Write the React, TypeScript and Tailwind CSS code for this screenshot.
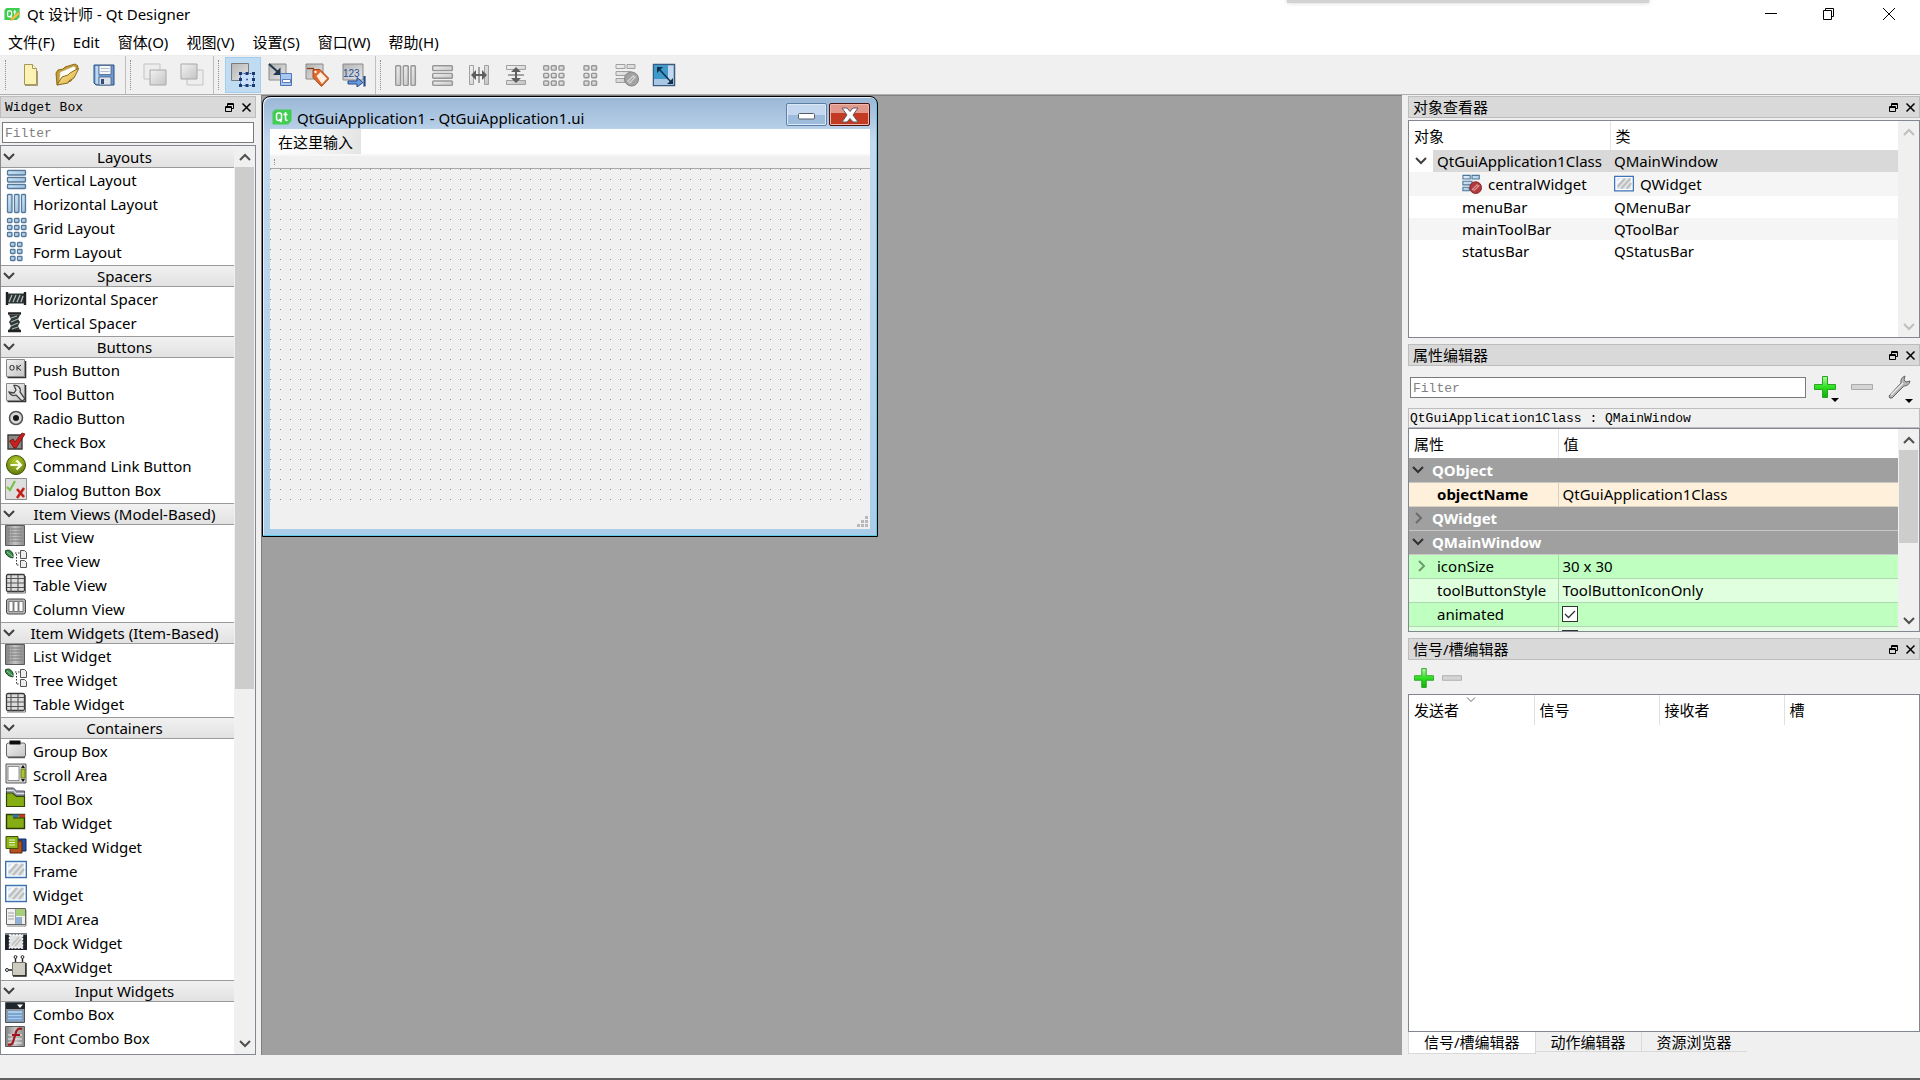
import React from 'react';
import clsx from 'clsx';

type IconProps = { className?: string };
type IconType = React.FC<IconProps>;

const MONO = "font-['Liberation_Mono','Noto_Sans_CJK_SC',monospace] text-[13px]";

/* ---------- shared gradients ---------- */

const Gradients = () => (
  <svg width="0" height="0" className="absolute" aria-hidden="true">
    <defs>
      <linearGradient id="blue" x1="0" y1="0" x2="1" y2="1">
        <stop offset="0" stopColor="#e4f2fb" />
        <stop offset="1" stopColor="#8db7da" />
      </linearGradient>
      <linearGradient id="grey" x1="0" y1="0" x2="1" y2="1">
        <stop offset="0" stopColor="#f2f2f2" />
        <stop offset="1" stopColor="#c4c4c4" />
      </linearGradient>
      <linearGradient id="steel" x1="0" y1="0" x2="1" y2="1">
        <stop offset="0" stopColor="#b4b4b4" />
        <stop offset="1" stopColor="#e6e6e6" />
      </linearGradient>
      <linearGradient id="dark" x1="0" y1="0" x2="1" y2="0">
        <stop offset="0" stopColor="#808080" />
        <stop offset="0.5" stopColor="#c4c4c4" />
        <stop offset="1" stopColor="#8a8a8a" />
      </linearGradient>
      <linearGradient id="plus" x1="0" y1="0" x2="0" y2="1">
        <stop offset="0" stopColor="#b6f7a8" />
        <stop offset="0.5" stopColor="#2fe021" />
        <stop offset="1" stopColor="#0fae0b" />
      </linearGradient>
      <linearGradient id="gold" x1="0" y1="0" x2="1" y2="1">
        <stop offset="0" stopColor="#fdf0a4" />
        <stop offset="1" stopColor="#d9a93a" />
      </linearGradient>
      <radialGradient id="olive" cx="0.5" cy="0.3" r="0.8">
        <stop offset="0" stopColor="#b4cc2c" />
        <stop offset="1" stopColor="#56700a" />
      </radialGradient>
    </defs>
  </svg>
);

/* ---------- small glyphs ---------- */

const Chevron = ({ className, dir = 'down' }: { className?: string; dir?: 'up' | 'down' | 'right' }) => (
  <svg viewBox="0 0 12 12" className={clsx('h-3 w-3', className)} fill="none" stroke="currentColor" strokeWidth="2">
    {dir === 'down' && <path d="M1 3l5 5 5-5" />}
    {dir === 'up' && <path d="M1 9l5-5 5 5" />}
    {dir === 'right' && <path d="M4 1l5 5-5 5" />}
  </svg>
);

const QtLogo = ({ pencil, className }: { pencil?: boolean; className?: string }) => (
  <svg viewBox="0 0 20 16" className={className}>
    <path d="M3 0.500h16.500v11.500l-3.500 3.500H0.500V3z" fill="#41cd52" />
    <g fill="none" stroke="#fff" strokeWidth="1.500">
      <rect x="4.500" y="4" width="5" height="7.500" rx="2" />
      <path d="M7.500 10l2 3M13.500 3v7q0 1.500 2 1.500M11.500 5.500h4" />
    </g>
    {pencil && <path d="M18.500 5 9 13l-1 3 4-1 7.500-7z" fill="#f0c64a" stroke="#b98e28" strokeWidth="0.600" />}
  </svg>
);

/* ---------- layout block icons ---------- */

type Block = [number, number, number, number];

const ROWS: Block[] = [[2.5, 2.5, 18, 4.5], [2.5, 9.5, 18, 4.5], [2.5, 16.5, 18, 4]];
const COLS: Block[] = [[2.5, 2.5, 4.5, 18], [9.5, 2.5, 4.5, 18], [16.5, 2.5, 4, 18]];
const GRID: Block[] = [2.5, 9.5, 16.5].flatMap((y) => [2.5, 9.5, 16.5].map((x): Block => [x, y, 4.5, 4]));
const FORM: Block[] = [2.5, 9.5, 16.5].flatMap((y) => [5.5, 12.5].map((x): Block => [x, y, 4.5, 4]));

const blocks = (list: Block[], grey = false): IconType =>
  function BlocksIcon({ className }) {
    return (
      <svg viewBox="0 0 22 22" className={className}>
        {list.map(([x, y, w, h]) => (
          <rect
            key={`${x}-${y}`}
            x={x}
            y={y}
            width={w}
            height={h}
            rx="0.800"
            fill={grey ? 'url(#grey)' : 'url(#blue)'}
            stroke={grey ? '#969696' : '#55799c'}
            strokeWidth="1.300"
          />
        ))}
      </svg>
    );
  };

/* ---------- toolbar icons ---------- */

const NewIcon: IconType = ({ className }) => (
  <svg viewBox="0 0 24 24" className={className}>
    <path d="M6.500 1.500h8l4 4v16h-12z" fill="#fbf3b4" stroke="#a99753" />
    <path d="M14.500 1.500v4h4" fill="#fffbe0" stroke="#a99753" />
    <path d="M7 22.500h12.500V8" fill="none" stroke="#6d5f2a" strokeOpacity="0.600" />
  </svg>
);

const OpenIcon: IconType = ({ className }) => (
  <svg viewBox="0 0 24 24" className={className}>
    <path d="M1 10 3 7l5-1 2-2 10-3 3 2-2 5-5 10L2 22z" fill="#c69a35" stroke="#8e6a1c" />
    <path d="m5 9 14-6 2 2-3 9L4 18z" fill="#fdfdf6" stroke="#b9a565" strokeWidth="0.700" />
    <path d="m2 22 5-8 6-2 2-2 9-5-5 10-5 3-1 2z" fill="url(#gold)" stroke="#8e6a1c" />
  </svg>
);

const SaveIcon: IconType = ({ className }) => (
  <svg viewBox="0 0 24 24" className={className}>
    <path d="M2 2h20v20H4l-2-2z" fill="#6c9ad0" stroke="#2b4f82" />
    <path d="M3.500 3h3v18H5l-1.500-1z" fill="#bcd9f5" />
    <path d="M7 2.500h12v9H7z" fill="#f4f6f8" stroke="#48628a" strokeWidth="0.800" />
    <path d="M8.500 5.500h9M8.500 8.500h9" stroke="#b8bec6" />
    <path d="M7 14h12v8H7z" fill="#dfe3e8" stroke="#48628a" strokeWidth="0.800" />
    <path d="M9 16h3v5H9z" fill="#2f4f80" />
  </svg>
);

const LowerIcon: IconType = ({ className }) => (
  <svg viewBox="0 0 24 24" className={className}>
    <path d="M1 1h16v15H1z" fill="#ededed" stroke="#c3c3c3" />
    <path d="M7 7h16v15H7z" fill="url(#grey)" stroke="#a8a8a8" />
  </svg>
);

const RaiseIcon: IconType = ({ className }) => (
  <svg viewBox="0 0 24 24" className={className}>
    <path d="M7 7h16v15H7z" fill="#ededed" stroke="#c3c3c3" />
    <path d="M1 1h16v15H1z" fill="url(#grey)" stroke="#a8a8a8" />
  </svg>
);

const EditWidgetsIcon: IconType = ({ className }) => (
  <svg viewBox="0 0 24 24" className={className}>
    <path d="M0.500 0.500h17v17h-17z" fill="url(#steel)" stroke="#7b7b7b" />
    <path d="M9.500 10.500h13v12h-13z" fill="#c9dffc" stroke="#3a5f9e" strokeDasharray="2 1" />
    <g fill="#1b3a70">
      <path d="M8 9h3v3H8zM14.500 9h3v3h-3zM21 9h3v3h-3zM8 15h3v3H8zM21 15h3v3h-3zM8 21h3v3H8zM14.500 21h3v3h-3zM21 21h3v3h-3z" />
      <path d="M15.300 15.800h1.500v1.500h-1.500z" />
    </g>
  </svg>
);

const EditSignalsIcon: IconType = ({ className }) => (
  <svg viewBox="0 0 24 24" className={className}>
    <path d="M1 1h17v16H1z" fill="url(#steel)" stroke="#8a8a8a" />
    <path d="M1 1 11 10" stroke="#22364d" strokeWidth="2" />
    <path d="M12.500 4.500v7.500H5z" fill="#22364d" />
    <path d="M12.500 10.500h11v12h-11z" fill="#a8c8f2" stroke="#4a76b8" />
    <path d="M14.500 16.500h8v3h-8z" fill="#fff" stroke="#3f66a5" strokeWidth="0.800" />
  </svg>
);

const EditBuddiesIcon: IconType = ({ className }) => (
  <svg viewBox="0 0 24 24" className={className}>
    <path d="M1 1h17v15H1z" fill="url(#steel)" stroke="#8a8a8a" />
    <path d="M2 5.500h7" stroke="#8b3a14" strokeWidth="1.300" />
    <path d="M8 6.500h7l9 9-7.500 8L8 14.500z" fill="#e0682c" stroke="#a8481a" />
    <path d="m11.500 13 4-4 6.500 6.500-5 5.500z" fill="#fdeedf" />
    <circle cx="10.500" cy="9" r="1.200" fill="#fff" />
  </svg>
);

const TabOrderIcon: IconType = ({ className }) => (
  <svg viewBox="0 0 24 24" className={className}>
    <path d="M1 1h20v16H1z" fill="url(#steel)" stroke="#8a8a8a" />
    <text x="1" y="14" fontSize="10" fontFamily="Liberation Sans, sans-serif" fill="#274f96">123</text>
    <path d="M6 18h9v-3.500l6 5-6 4.500v-3H6z" fill="#6a9bdc" stroke="#24498c" />
    <path d="M22.500 13v10.500" stroke="#24498c" strokeWidth="2.200" />
  </svg>
);

const HSplitIcon: IconType = ({ className }) => (
  <svg viewBox="0 0 24 24" className={className}>
    <path d="M2.500 2.500h4v19h-4zM17.500 2.500h4v19h-4z" fill="url(#grey)" stroke="#a0a0a0" />
    <path d="M12 4v16" stroke="#8a8a8a" strokeWidth="1.500" />
    <path d="M4 12l5-5v4h6V7l5 5-5 5v-4H9v4z" fill="#5e5e5e" />
  </svg>
);

const VSplitIcon: IconType = ({ className }) => (
  <svg viewBox="0 0 24 24" className={className}>
    <path d="M2.500 2.500h19v4h-19zM2.500 17.500h19v4h-19z" fill="url(#grey)" stroke="#a0a0a0" />
    <path d="M4 12h16" stroke="#8a8a8a" strokeWidth="1.500" />
    <path d="M12 4l5 5h-4v6h4l-5 5-5-5h4V9H7z" fill="#5e5e5e" />
  </svg>
);

const BreakLayoutIcon: IconType = ({ className }) => (
  <svg viewBox="0 0 24 24" className={className}>
    <path d="M1 1.500h9v4H1zM12 1.500h8v4h-8zM1 8.500h15v4H1zM1 15.500h9v4H1z" fill="url(#grey)" stroke="#a0a0a0" />
    <circle cx="16.500" cy="16" r="7" fill="#a2a2a2" stroke="#858585" />
    <path d="m13 18 5-5 2 1-5 6z" fill="none" stroke="#d2d2d2" strokeWidth="1.400" />
  </svg>
);

const AdjustSizeIcon: IconType = ({ className }) => (
  <svg viewBox="0 0 24 24" className={className}>
    <path d="M1.500 1.500h21v21h-21z" fill="#c2d9ef" stroke="#3a5a80" strokeWidth="1.500" />
    <path d="M2 2h14v14H2z" fill="#3f9acb" />
    <path d="M2 16h14v6H2z" fill="#a9c6e4" />
    <path d="m7 6 12 13" stroke="#10304c" strokeWidth="1.500" />
    <path d="M5 4h6l-6 6zM21 21h-6l6-6z" fill="#10304c" />
  </svg>
);

/* ---------- widget box icons ---------- */

const HSpacerIcon: IconType = ({ className }) => (
  <svg viewBox="0 0 22 22" className={className}>
    <path d="M2 5v13M20 5v13" stroke="#222" strokeWidth="2.400" />
    <path d="M3 6.500h16v10H3z" fill="#2c3434" />
    <path d="m4 15 3-7M8 15l3-7M12 15l3-7M16 15l2-6" stroke="#aebaba" strokeWidth="1.300" />
  </svg>
);

const VSpacerIcon: IconType = ({ className }) => (
  <svg viewBox="0 0 22 22" className={className}>
    <path d="M3 2.500h13M3 20h13" stroke="#222" strokeWidth="2.600" />
    <path d="M4 4h11l-2 4 2 3-2 4 2 4H4l2-4-2-4 2-3z" fill="#2f3737" />
    <path d="m6 7 6-2M6 11l7-3M6 15l7-3M7 18l6-2" stroke="#a6b2b2" strokeWidth="1.200" />
  </svg>
);

const KeyCap = ({ children, className }: { children: React.ReactNode; className?: string }) => (
  <svg viewBox="0 0 22 22" className={className}>
    <path d="M2.500 19.500h18V3" fill="none" stroke="#333" strokeWidth="1.600" />
    <path d="M1.500 1.500h18v17h-18z" fill="url(#grey)" stroke="#8a8a8a" />
    {children}
  </svg>
);

const PushButtonIcon: IconType = ({ className }) => (
  <KeyCap className={className}>
    <rect x="5" y="7.500" width="4" height="4.500" rx="1.500" fill="none" stroke="#222" />
    <path d="M12 7v5.500M16 7l-3.500 2.700L16 12.500" fill="none" stroke="#222" />
  </KeyCap>
);

const ToolButtonIcon: IconType = ({ className }) => (
  <KeyCap className={className}>
    <path d="M9 3.500a5 5 0 0 1 6 6.500l5 7-3 2-6-6a5 5 0 0 1-7-3l5 1 2-3z" fill="#e4e4e4" stroke="#444" strokeWidth="1.300" />
  </KeyCap>
);

const RadioIcon: IconType = ({ className }) => (
  <svg viewBox="0 0 22 22" className={className}>
    <circle cx="11" cy="12" r="6.500" fill="#d8d8d8" stroke="#555" strokeWidth="1.600" />
    <circle cx="11" cy="12" r="3" fill="#151515" />
  </svg>
);

const CheckIcon: IconType = ({ className }) => (
  <svg viewBox="0 0 22 22" className={className}>
    <path d="M3 5h14v14H3z" fill="#8e8787" stroke="#3d3838" strokeWidth="1.400" />
    <path d="M4.500 11 8 9l2 3 7-9 3 1-9 14H9z" fill="#c9201f" stroke="#6f0f0f" strokeWidth="0.800" />
  </svg>
);

const CommandLinkIcon: IconType = ({ className }) => (
  <svg viewBox="0 0 22 22" className={className}>
    <circle cx="11" cy="11" r="9.500" fill="url(#olive)" stroke="#3e5208" />
    <path d="M5.500 11h10M11.500 6.500 16 11l-4.500 4.500" fill="none" stroke="#fbffe8" strokeWidth="2.200" />
  </svg>
);

const DialogBoxIcon: IconType = ({ className }) => (
  <svg viewBox="0 0 22 22" className={className}>
    <path d="M0.500 0.500h21v21H0.500z" fill="#dedede" stroke="#8f8f8f" />
    <path d="m2 9 3 3 5-9" fill="none" stroke="#79c043" strokeWidth="2.200" />
    <path d="m12 11 7 8M19 10l-7 10" stroke="#c4201c" strokeWidth="2.600" />
  </svg>
);

const ListIcon: IconType = ({ className }) => (
  <svg viewBox="0 0 22 22" className={className}>
    <path d="M0.500 0.500h19v20h-19z" fill="url(#dark)" stroke="#5a5a5a" />
    <path d="M3 4h2m1 0h11M3 7h2m1 0h11M3 10h2m1 0h11M3 13h2m1 0h11M3 16h2m1 0h11" stroke="#747474" strokeWidth="0.900" />
  </svg>
);

const TreeIcon: IconType = ({ className }) => (
  <svg viewBox="0 0 22 22" className={className}>
    <path d="M0 2q5-3 8 3v4Q1 8 0 2z" fill="#3f8a4f" stroke="#1c4a28" />
    <path d="m2 3 6 5" stroke="#a5d8ae" strokeWidth="0.800" />
    <path d="M10 4h5M11.500 5v11M12 16h3" stroke="#333" strokeDasharray="1.500 1.500" />
    <path d="M15.500 1.500h4l2 2v6h-6zM15.500 11.500h4l2 2v5h-6z" fill="#eee" stroke="#555" />
  </svg>
);

const TableIcon: IconType = ({ className }) => (
  <svg viewBox="0 0 22 22" className={className}>
    <path d="M2 20h18.500V3" fill="none" stroke="#777" />
    <rect x="1.500" y="1.500" width="18" height="17" rx="1.500" fill="#dcdcdc" stroke="#3a3a3a" strokeWidth="1.300" />
    <path d="M2 5.500h17M2 10h17M2 14.500h17M6 2v17M13 2v17" stroke="#555" strokeWidth="1.100" />
  </svg>
);

const ColumnIcon: IconType = ({ className }) => (
  <svg viewBox="0 0 22 22" className={className}>
    <rect x="1.500" y="2" width="19" height="15" rx="2" fill="#b5b5b5" stroke="#4a4a4a" />
    <path d="M4 4.500h4v10H4zM9 4.500h4v10H9zM14 4.500h4v10h-4z" fill="#fff" stroke="#555" strokeWidth="0.700" />
  </svg>
);

const GroupBoxIcon: IconType = ({ className }) => (
  <svg viewBox="0 0 22 22" className={className}>
    <rect x="1.500" y="4" width="19" height="14" rx="2" fill="url(#grey)" stroke="#666" />
    <path d="M3 18.500h17" stroke="#555" strokeWidth="1.500" />
    <path d="M4.500 1.500h11v4h-11z" fill="#0d0d0d" />
  </svg>
);

const ScrollAreaIcon: IconType = ({ className }) => (
  <svg viewBox="0 0 22 22" className={className}>
    <path d="M1 1h20v19H1z" fill="#d4d4d4" stroke="#5d5d5d" />
    <path d="M3 3.500h11v14H3z" fill="#fff" stroke="#777" strokeWidth="0.800" />
    <path d="M16 6h4v9h-4z" fill="#a9c52d" stroke="#5b6d0e" strokeWidth="0.800" />
    <path d="m18 2 2 3h-4zM18 19l-2-3h4z" fill="#111" />
  </svg>
);

const ToolBoxIcon: IconType = ({ className }) => (
  <svg viewBox="0 0 22 22" className={className}>
    <path d="M1.500 1h7l3 3h8v5h-18z" fill="#9aa0aa" stroke="#4a4f58" />
    <path d="M1.500 3.500h7l3 3h8" fill="none" stroke="#dfe2e6" />
    <path d="M1.500 6h6l4 3.500h8v10h-18z" fill="#86ad14" stroke="#33450a" strokeWidth="1.200" />
  </svg>
);

const TabIcon: IconType = ({ className }) => (
  <svg viewBox="0 0 22 22" className={className}>
    <path d="M1.500 3.500h18v14h-18z" fill="#86ad14" stroke="#2c3b08" strokeWidth="1.400" />
    <path d="M8 3.500h5v3H8z" fill="#2f6fc0" />
    <path d="M14 3.500h6v3h-6z" fill="#c23a2c" />
    <path d="M8 7h12" stroke="#2c3b08" />
  </svg>
);

const StackedIcon: IconType = ({ className }) => (
  <svg viewBox="0 0 22 22" className={className}>
    <path d="M9 4h12v12H9z" fill="#2353a8" stroke="#12295a" />
    <path d="M5 6h12v12H5z" fill="#b4511c" stroke="#5c260a" />
    <path d="M1 1.500h12v12H1z" fill="#8db41c" stroke="#3d510a" />
    <path d="M4 5h6M4 7.500h6M4 10h6" stroke="#eef7c5" />
  </svg>
);

const FrameIcon: IconType = ({ className }) => (
  <svg viewBox="0 0 22 22" className={className}>
    <path d="M0.700 2.500h20.600v16H0.700z" fill="#fff" stroke="#3f73b3" strokeWidth="1.400" />
    <path d="M3 4.500h16v12H3z" fill="#d9e6f3" />
    <path d="m4 14 8-9M8 16 18 5M14 16l5-6" stroke="#c4bdb2" strokeWidth="2.200" />
    <path d="m3.500 10 5-5" stroke="#fff" strokeWidth="1.500" />
  </svg>
);

const MdiIcon: IconType = ({ className }) => (
  <svg viewBox="0 0 22 22" className={className}>
    <path d="M2 19h19V3" fill="none" stroke="#888" />
    <path d="M1.500 1.500h19v16h-19z" fill="#f1f1f1" stroke="#666" />
    <path d="M11 2h9v7h-9z" fill="#a6cf7a" />
    <path d="M11 10h5v7h-5z" fill="#8fb2d8" />
    <path d="M3 6h6M3 9h6M3 12h6M10.500 2v15M16.500 10v7" stroke="#a2a2a2" />
  </svg>
);

const DockIcon: IconType = ({ className }) => (
  <svg viewBox="0 0 22 22" className={className}>
    <path d="M0 2h22v17H0z" fill="#1e222a" />
    <path d="M0 2h22v2H0z" fill="#777b83" />
    <rect x="4.500" y="4" width="13" height="13" fill="#dfe3e6" stroke="#fff" strokeWidth="1.400" strokeDasharray="2 1.200" />
    <path d="m7 14 7-8M10 15l6-7" stroke="#c2beb6" strokeWidth="1.400" />
  </svg>
);

const AxIcon: IconType = ({ className }) => (
  <svg viewBox="0 0 22 22" className={className}>
    <path d="M10.500 8V3M17.500 8V3M7 15H4" stroke="#222" strokeWidth="1.400" />
    <circle cx="10.500" cy="2" r="1.400" fill="#fff" stroke="#222" />
    <circle cx="17.500" cy="2" r="1.400" fill="#fff" stroke="#222" />
    <circle cx="2" cy="15" r="1.500" fill="#fff" stroke="#222" />
    <path d="M7.500 7.500h13v13h-13z" fill="#cfccc2" stroke="#77746a" />
    <path d="M8 21h13V8" fill="none" stroke="#222" strokeWidth="1.400" />
  </svg>
);

const ComboIcon: IconType = ({ className }) => (
  <svg viewBox="0 0 22 22" className={className}>
    <path d="M0.500 0.500h19v20h-19z" fill="#8b97a4" stroke="#4d5660" />
    <path d="M1 1h19v6H1z" fill="#20262e" />
    <path d="M12 2.500h6l-3 3.500z" fill="#fff" />
    <path d="M3 9h14v10H3z" fill="#a9cbec" />
    <path d="M3 12h14M3 15h14M3 18h14" stroke="#4f7fb3" />
  </svg>
);

const FontComboIcon: IconType = ({ className }) => (
  <svg viewBox="0 0 22 22" className={className}>
    <path d="M0.500 0.500h19v20h-19z" fill="url(#dark)" stroke="#5c5c5c" />
    <path d="M3 9h14M3 13h14M3 17h14" stroke="#eee" />
    <path d="M17 3q-5-2-6.500 5L8 16q-1 3.500-5 2.500M7 9h8" fill="none" stroke="#a3131b" strokeWidth="2.200" />
  </svg>
);

const NoLayoutIcon: IconType = ({ className }) => (
  <svg viewBox="0 0 22 22" className={className}>
    <path d="M1 1.500h8v4H1zM11 1.500h8v4h-8zM1 8h10v4H1zM1 14.500h7v4H1z" fill="url(#blue)" stroke="#4d7699" strokeWidth="1.200" />
    <circle cx="15" cy="15" r="6.500" fill="#b23a3c" stroke="#7d2224" />
    <path d="m11.500 17 5-5 2 1-5 5z" fill="none" stroke="#dc9c9c" strokeWidth="1.300" />
  </svg>
);

const PlusIcon: IconType = ({ className }) => (
  <svg viewBox="0 0 22 22" className={className}>
    <path d="M8.500 0.500h5v8h8v5h-8v8h-5v-8h-8v-5h8z" fill="url(#plus)" stroke="#2aa322" />
  </svg>
);

const MinusIcon: IconType = ({ className }) => (
  <svg viewBox="0 0 22 22" className={className}>
    <path d="M0.500 8.500h21v5h-21z" fill="#d4d4d4" stroke="#ababab" />
  </svg>
);

const WrenchIcon: IconType = ({ className }) => (
  <svg viewBox="0 0 24 24" className={className}>
    <path d="m2 21 12-13q-1-5 4-7l-1 4 2 2 4-1q-1 5-6 5L5 23q-3 1-3-2z" fill="#b4b4b4" stroke="#656565" />
    <path d="m4 20 12-12" stroke="#f2f2f2" strokeWidth="1.200" />
  </svg>
);

/* ---------- data ---------- */

const MENUS = ['文件(F)', 'Edit', '窗体(O)', '视图(V)', '设置(S)', '窗口(W)', '帮助(H)'];

const TOOLS: { name: string; Icon: IconType; active?: boolean }[][] = [
  [
    { name: 'New', Icon: NewIcon },
    { name: 'Open', Icon: OpenIcon },
    { name: 'Save', Icon: SaveIcon },
  ],
  [
    { name: 'Send to back', Icon: LowerIcon },
    { name: 'Bring to front', Icon: RaiseIcon },
  ],
  [
    { name: 'Edit widgets', Icon: EditWidgetsIcon, active: true },
    { name: 'Edit signals/slots', Icon: EditSignalsIcon },
    { name: 'Edit buddies', Icon: EditBuddiesIcon },
    { name: 'Edit tab order', Icon: TabOrderIcon },
  ],
  [
    { name: 'Lay out horizontally', Icon: blocks(COLS, true) },
    { name: 'Lay out vertically', Icon: blocks(ROWS, true) },
    { name: 'Horizontal splitter', Icon: HSplitIcon },
    { name: 'Vertical splitter', Icon: VSplitIcon },
    { name: 'Lay out in a grid', Icon: blocks(GRID, true) },
    { name: 'Lay out in a form', Icon: blocks(FORM, true) },
    { name: 'Break layout', Icon: BreakLayoutIcon },
    { name: 'Adjust size', Icon: AdjustSizeIcon },
  ],
];

const WIDGETS: { title: string; items: [string, IconType][] }[] = [
  {
    title: 'Layouts',
    items: [
      ['Vertical Layout', blocks(ROWS)],
      ['Horizontal Layout', blocks(COLS)],
      ['Grid Layout', blocks(GRID)],
      ['Form Layout', blocks(FORM)],
    ],
  },
  {
    title: 'Spacers',
    items: [
      ['Horizontal Spacer', HSpacerIcon],
      ['Vertical Spacer', VSpacerIcon],
    ],
  },
  {
    title: 'Buttons',
    items: [
      ['Push Button', PushButtonIcon],
      ['Tool Button', ToolButtonIcon],
      ['Radio Button', RadioIcon],
      ['Check Box', CheckIcon],
      ['Command Link Button', CommandLinkIcon],
      ['Dialog Button Box', DialogBoxIcon],
    ],
  },
  {
    title: 'Item Views (Model-Based)',
    items: [
      ['List View', ListIcon],
      ['Tree View', TreeIcon],
      ['Table View', TableIcon],
      ['Column View', ColumnIcon],
    ],
  },
  {
    title: 'Item Widgets (Item-Based)',
    items: [
      ['List Widget', ListIcon],
      ['Tree Widget', TreeIcon],
      ['Table Widget', TableIcon],
    ],
  },
  {
    title: 'Containers',
    items: [
      ['Group Box', GroupBoxIcon],
      ['Scroll Area', ScrollAreaIcon],
      ['Tool Box', ToolBoxIcon],
      ['Tab Widget', TabIcon],
      ['Stacked Widget', StackedIcon],
      ['Frame', FrameIcon],
      ['Widget', FrameIcon],
      ['MDI Area', MdiIcon],
      ['Dock Widget', DockIcon],
      ['QAxWidget', AxIcon],
    ],
  },
  {
    title: 'Input Widgets',
    items: [
      ['Combo Box', ComboIcon],
      ['Font Combo Box', FontComboIcon],
    ],
  },
];

/* ---------- building blocks ---------- */

const DockTitle = ({ title }: { title: string }) => {
  const latin = /^[\x20-\x7e]+$/.test(title);
  return (
    <div className="flex h-[22px] shrink-0 items-center border border-[#bdbdbd] bg-[#d9d9d9] pl-1">
      <h2 className={clsx('flex-1', latin && 'pt-0.5', latin && MONO)}>{title}</h2>
      <button aria-label={`Float ${title}`} className="flex w-[17px] justify-center">
        <svg viewBox="0 0 9 9" className="h-[9px] w-[9px]" fill="none" stroke="#000">
          <path d="M2.500 3V0.500h6v5H6.500M2.500 1.500h6M0.500 3.500h6v5h-6zM0.500 4.500h6" />
        </svg>
      </button>
      <button aria-label={`Close ${title}`} className="flex w-[17px] justify-center">
        <svg viewBox="0 0 9 9" className="h-[9px] w-[9px]" stroke="#000" strokeWidth="1.500">
          <path d="m0.500 0.500 8 8M8.500 0.500l-8 8" />
        </svg>
      </button>
    </div>
  );
};

const ScrollBar = ({ thumb, muted }: { thumb?: string; muted?: boolean }) => (
  <div
    className={clsx(
      'flex w-[21px] shrink-0 flex-col items-center bg-[#f0f0f0]',
      muted ? 'text-[#bfbfbf]' : 'text-[#505050]',
    )}
  >
    <div className="flex h-[21px] shrink-0 items-center">
      <Chevron dir="up" />
    </div>
    <div className="w-full flex-1">
      {thumb && <div className={clsx('mx-auto w-[19px] bg-[#cdcdcd]', thumb)} />}
    </div>
    <div className="flex h-[21px] shrink-0 items-center">
      <Chevron />
    </div>
  </div>
);

const FilterInput = ({ label, className }: { label: string; className?: string }) => (
  <input
    aria-label={label}
    placeholder="Filter"
    className={clsx(
      'h-[21px] min-w-0 border border-[#7a7a7a] bg-white px-0.5 pt-0.5 outline-none placeholder:text-[#808080]',
      MONO,
      className,
    )}
  />
);

/* ---------- panels ---------- */

const WidgetBox = () => (
  <aside className="flex w-64 shrink-0 flex-col">
    <DockTitle title="Widget Box" />
    <FilterInput label="Widget filter" className="mx-0.5 mt-1 shrink-0" />
    <div className="mt-0.5 flex min-h-0 flex-1 border border-[#828790] bg-white">
      <div className="min-w-0 flex-1 overflow-hidden">
        {WIDGETS.map(({ title, items }, i) => (
          <section key={title} className="pb-px">
            <h3>
              <button
                className={clsx(
                  'flex h-[22px] w-full items-center border-b border-[#9a9a9a] bg-linear-to-b from-[#f1f1f1] to-[#e2e2e2] pl-0.5',
                  i > 0 && 'border-t',
                )}
              >
                <Chevron className="text-[#404040]" />
                <span className="flex-1 text-center">{title}</span>
              </button>
            </h3>
            <ul>
              {items.map(([name, Icon]) => (
                <li key={name} className="flex h-6 gap-1.5 pl-1 leading-6">
                  <Icon className="h-[22px] w-[22px] shrink-0" />
                  <span>{name}</span>
                </li>
              ))}
            </ul>
          </section>
        ))}
      </div>
      <ScrollBar thumb="h-[522px]" />
    </div>
  </aside>
);

const FormWindow = () => (
  <div className="flex h-[441px] w-[616px] flex-col rounded-t-lg border border-black bg-linear-to-b from-[#9ab7d6] from-0% via-[#c3d9ef] via-10% to-[#a9cde9] px-[7px] pb-[7px] shadow-[inset_-1px_-1px_0_#5cc9ea,inset_1px_1px_0_#e6f0fa]">
    <div className="flex h-8 shrink-0 items-start gap-0.5 pl-0.5">
      <QtLogo className="mt-3 h-4 w-5" />
      <h2 className="mt-[11px] flex-1 pl-[3px]">QtGuiApplication1 - QtGuiApplication1.ui</h2>
      <button
        aria-label="Minimize form"
        className="mt-1.5 flex h-[23px] w-[41px] items-center justify-center rounded-xs border border-[#5d7fa8] bg-linear-to-b from-[#c3d8ee] from-50% to-[#9dbcdc] to-50% shadow-[inset_0_0_0_1px_#dce9f6]"
      >
        <svg viewBox="0 0 17 7" className="mt-1 h-[7px] w-[17px]">
          <rect x="0.500" y="0.500" width="16" height="5.500" rx="1" fill="#fff" stroke="#555c66" />
        </svg>
      </button>
      <button
        aria-label="Close form"
        className="mt-1.5 flex h-[23px] w-[41px] items-center justify-center rounded-xs border border-[#4a1410] bg-linear-to-b from-[#e0998c] from-45% to-[#c23b22] to-45% shadow-[inset_0_0_0_1px_#eeb5aa]"
      >
        <svg viewBox="0 0 18 16" className="h-4 w-[18px]">
          <path d="M1 1h5l3 3.500L12 1h5l-5 7 5 7h-5l-3-3.500L6 15H1l5-7z" fill="#fff" stroke="#5d5d66" />
        </svg>
      </button>
    </div>
    <div className="h-[25px] shrink-0 bg-white">
      <button className="h-full bg-linear-to-r from-white via-[#f6f6f6] to-[#e4e4e4] px-2">在这里输入</button>
    </div>
    <div className="flex h-[15px] shrink-0 items-center border-t-2 border-b border-t-[#f7f7f7] border-b-[#a8a8a8] bg-[#f0f0f0] pl-1">
      <div className="h-1.5 w-px border-l border-dotted border-[#909090]" />
    </div>
    <div className="flex flex-1 flex-col bg-[#f0f0f0]">
      <div className="mr-2 h-[332px] bg-[linear-gradient(90deg,#f0f0f0_9px,transparent_9px),linear-gradient(#f0f0f0_9px,#8c8c8c_9px)] bg-[size:10px_10px] bg-[position:1px_1px]" />
      <svg viewBox="0 0 11 11" className="mt-auto mr-0.5 mb-0.5 h-[11px] w-[11px] self-end" fill="#b8b8b8">
        <path d="M8 0h3v3H8zM4 4h3v3H4zM8 4h3v3H8zM0 8h3v3H0zM4 8h3v3H4zM8 8h3v3H8z" />
      </svg>
    </div>
  </div>
);

const ObjectInspector = () => (
  <section className="flex shrink-0 flex-col">
    <DockTitle title="对象查看器" />
    <div className="mt-0.5 flex h-[218px] border border-[#828790] bg-white">
      <div className="min-w-0 flex-1">
        <table className="w-full table-fixed border-collapse text-left whitespace-nowrap">
          <thead>
            <tr className="h-[29px]">
              <th className="w-[201px] border-r border-[#e5e5e5] pl-[5px] font-normal">对象</th>
              <th className="pl-[5px] font-normal">类</th>
            </tr>
          </thead>
          <tbody className="leading-[22px]">
            <tr>
              <td className="p-0">
                <div className="flex items-center">
                  <Chevron className="mx-1.5 text-[#404040]" />
                  <span className="flex-1 bg-[#d9d9d9] pl-1">QtGuiApplication1Class</span>
                </div>
              </td>
              <td className="bg-[#d9d9d9] p-0 pl-1">QMainWindow</td>
            </tr>
            <tr className="h-6 bg-[#f5f5f5]">
              <td className="p-0 pl-[53px]">
                <div className="flex items-center gap-1.5">
                  <NoLayoutIcon className="h-5 w-5" />
                  centralWidget
                </div>
              </td>
              <td className="p-0 pl-1">
                <div className="flex items-center gap-1.5">
                  <FrameIcon className="h-5 w-5" />
                  QWidget
                </div>
              </td>
            </tr>
            {[
              ['menuBar', 'QMenuBar'],
              ['mainToolBar', 'QToolBar'],
              ['statusBar', 'QStatusBar'],
            ].map(([name, cls], i) => (
              <tr key={name} className={clsx(i === 1 && 'bg-[#f5f5f5]')}>
                <td className="p-0 pl-[53px]">{name}</td>
                <td className="p-0 pl-1">{cls}</td>
              </tr>
            ))}
          </tbody>
        </table>
      </div>
      <ScrollBar muted />
    </div>
  </section>
);

const GroupRow = ({ name, open }: { name: string; open?: boolean }) => (
  <tr className="h-6 border-b border-[#c8c8c8] bg-[#a0a0a0] font-bold text-white">
    <td colSpan={2} className="p-0">
      <div className="flex items-center gap-2 pl-[3px]">
        <Chevron dir={open ? 'down' : 'right'} className={open ? 'text-[#303030]' : 'text-[#6c6c6c]'} />
        {name}
      </div>
    </td>
  </tr>
);

const PropertyEditor = () => (
  <section className="mt-1.5 flex shrink-0 flex-col">
    <DockTitle title="属性编辑器" />
    <div className="flex h-[42px] items-center pr-[3px] pl-0.5">
      <FilterInput label="Property filter" className="flex-1" />
      <button aria-label="Add dynamic property" className="relative flex w-[37px] justify-center">
        <PlusIcon className="h-[22px] w-[22px]" />
        <span className="absolute right-1 -bottom-1 border-x-4 border-t-4 border-x-transparent border-t-black" />
      </button>
      <button aria-label="Remove dynamic property" className="flex w-[37px] justify-center">
        <MinusIcon className="h-[22px] w-[22px]" />
      </button>
      <button aria-label="Configure property editor" className="relative flex w-[37px] justify-center">
        <WrenchIcon className="h-6 w-6" />
        <span className="absolute right-1 -bottom-1 border-x-4 border-t-4 border-x-transparent border-t-black" />
      </button>
    </div>
    <div className={clsx('h-5 border border-[#bdbdbd] pl-px leading-5', MONO)}>
      QtGuiApplication1Class : QMainWindow
    </div>
    <div className="flex h-[204px] overflow-hidden border border-[#828790] bg-white">
      <div className="min-w-0 flex-1">
        <table className="w-full table-fixed border-collapse text-left leading-[22px] whitespace-nowrap">
          <thead>
            <tr className="h-[29px]">
              <th className="w-[149px] border-r border-[#e5e5e5] pl-[5px] font-normal">属性</th>
              <th className="pl-[5px] font-normal">值</th>
            </tr>
          </thead>
          <tbody>
            <GroupRow name="QObject" open />
            <tr className="h-6 border-b border-[#d8d0c4] bg-[#fff0dc]">
              <td className="border-r border-[#d8d0c4] p-0 pl-7 font-bold">objectName</td>
              <td className="p-0 pl-1">QtGuiApplication1Class</td>
            </tr>
            <GroupRow name="QWidget" />
            <GroupRow name="QMainWindow" open />
            <tr className="h-6 border-b border-[#b0d8b0] bg-[#bfffbf]">
              <td className="border-r border-[#b0d8b0] p-0">
                <div className="flex items-center gap-2.5 pl-1.5">
                  <Chevron dir="right" className="text-[#6f9a6f]" />
                  iconSize
                </div>
              </td>
              <td className="p-0 pl-1">30 x 30</td>
            </tr>
            <tr className="h-6 border-b border-[#b0d8b0] bg-[#dfffdf]">
              <td className="border-r border-[#b0d8b0] p-0 pl-7">toolButtonStyle</td>
              <td className="p-0 pl-1">ToolButtonIconOnly</td>
            </tr>
            <tr className="h-6 border-b border-[#b0d8b0] bg-[#bfffbf]">
              <td className="border-r border-[#b0d8b0] p-0 pl-7">
                <label htmlFor="animated">animated</label>
              </td>
              <td className="p-0 pl-[3px]">
                <div className="grid w-4">
                  <input
                    id="animated"
                    type="checkbox"
                    defaultChecked
                    className="peer col-start-1 row-start-1 h-4 w-4 appearance-none border border-[#333] bg-white"
                  />
                  <svg
                    viewBox="0 0 16 16"
                    className="pointer-events-none invisible col-start-1 row-start-1 h-4 w-4 peer-checked:visible"
                    fill="none"
                    stroke="#333"
                    strokeWidth="1.300"
                  >
                    <path d="m3 8 3.500 3.500L13 5" />
                  </svg>
                </div>
              </td>
            </tr>
            <tr className="h-6 bg-[#dfffdf]">
              <td className="border-r border-[#b0d8b0] p-0" />
              <td className="p-0 pl-[3px]">
                <input
                  aria-label="documentMode"
                  type="checkbox"
                  className="block h-4 w-4 appearance-none border border-[#333] bg-white"
                />
              </td>
            </tr>
          </tbody>
        </table>
      </div>
      <ScrollBar thumb="h-[93px]" />
    </div>
  </section>
);

const SignalEditor = () => (
  <section className="mt-1.5 flex min-h-0 flex-1 flex-col">
    <DockTitle title="信号/槽编辑器" />
    <div className="flex h-[34px] shrink-0 items-center gap-2 pl-1.5 pt-0.5">
      <button aria-label="Add connection">
        <PlusIcon className="h-5 w-5" />
      </button>
      <button aria-label="Remove connection">
        <MinusIcon className="h-5 w-5" />
      </button>
    </div>
    <div className="flex-1 border border-[#828790] bg-white">
      <table className="w-full table-fixed border-collapse text-left">
        <thead>
          <tr className="h-[30px]">
            {['发送者', '信号', '接收者', '槽'].map((name, i) => (
              <th
                key={name}
                className={clsx('relative p-0 pl-[5px] font-normal', i < 3 && 'w-[125px] border-r border-[#e0e0e0]')}
              >
                {name}
                {i === 0 && (
                  <svg
                    viewBox="0 0 10 5"
                    className="absolute top-0.5 left-1/2 h-[5px] w-2.5 -translate-x-1/2"
                    fill="none"
                    stroke="#666"
                  >
                    <path d="m1 0.500 4 4 4-4" />
                  </svg>
                )}
              </th>
            ))}
          </tr>
        </thead>
      </table>
    </div>
    <div className="flex h-[23px] shrink-0 items-start">
      <button className="h-[22px] border border-t-0 border-[#d9d9d9] bg-white px-[15px] leading-[21px]">信号/槽编辑器</button>
      <button className="h-5 border-r border-b border-[#d9d9d9] px-[15px] leading-5">动作编辑器</button>
      <button className="h-5 border-b border-[#d9d9d9] px-[15px] leading-5">资源浏览器</button>
    </div>
  </section>
);

export default function App() {
  return (
    <div className="relative flex h-screen flex-col overflow-hidden bg-[#f0f0f0] font-['Noto_Sans','Noto_Sans_CJK_SC',sans-serif] text-[15px] leading-5 text-black">
      <Gradients />
      <div className="absolute -top-1 right-[271px] h-[7px] w-[362px] bg-[#d2d2d2] shadow-[0_0_4px_#d2d2d2]" />

      <header className="shrink-0 bg-white">
        <div className="flex h-7 items-center gap-[7px] pl-1">
          <QtLogo pencil className="h-3.5 w-4" />
          <h1 className="flex-1">Qt 设计师 - Qt Designer</h1>
          <div className="flex">
            <button aria-label="Minimize" className="flex w-[58px] justify-center">
              <svg viewBox="0 0 12 12" className="h-3 w-3" stroke="#000">
                <path d="M0 5.500h12" />
              </svg>
            </button>
            <button aria-label="Restore" className="flex w-[58px] justify-center">
              <svg viewBox="0 0 12 12" className="h-3 w-3" fill="none" stroke="#000">
                <path d="M0.500 2.500h8v9h-8zM2.500 2.500v-2h8v8h-2" />
              </svg>
            </button>
            <button aria-label="Close" className="flex w-[62px] justify-center">
              <svg viewBox="0 0 12 12" className="h-3 w-3" stroke="#000">
                <path d="m0 0 12 12M12 0 0 12" />
              </svg>
            </button>
          </div>
        </div>
        <nav className="flex h-[28px] items-start gap-0.5 border-b border-[#ececec] pr-2">
          {MENUS.map((menu) => (
            <button key={menu} className="px-2 leading-[28px]">
              {menu}
            </button>
          ))}
        </nav>
      </header>

      <div className="flex h-[39px] shrink-0 items-stretch border-b border-[#b0b0b0] pl-px">
        {TOOLS.map((group, i) => (
          <div
            key={group[0].name}
            className={clsx('flex items-center gap-px pr-[3px] pl-1', i < 3 && 'border-r border-[#c0c0c0]')}
          >
            <div className="mr-[5px] h-[30px] w-px border-l border-dotted border-[#909090]" />
            {group.map(({ name, Icon, active }) => (
              <button
                key={name}
                aria-label={name}
                className={clsx(
                  'flex h-9 w-9 items-center justify-center',
                  active && 'border border-[#a5cdee] bg-[#c0dcf3]',
                )}
              >
                <Icon className="h-6 w-6" />
              </button>
            ))}
          </div>
        ))}
      </div>

      <div className="flex min-h-0 flex-1 pt-px">
        <WidgetBox />
        <main className="-mt-px ml-[5px] min-w-0 flex-1 border-t border-l border-[#808080] bg-[#a0a0a0]">
          <FormWindow />
        </main>
        <aside className="ml-1.5 flex w-[512px] shrink-0 flex-col">
          <ObjectInspector />
          <PropertyEditor />
          <SignalEditor />
        </aside>
      </div>

      <footer className="h-[25px] shrink-0 border-b-2 border-[#606060]" />
    </div>
  );
}
